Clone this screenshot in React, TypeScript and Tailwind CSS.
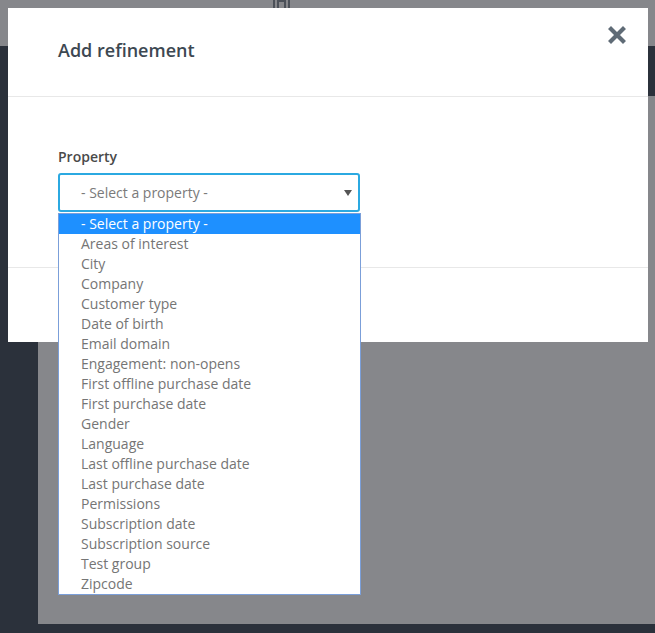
const OPTIONS = [
  'Areas of interest',
  'City',
  'Company',
  'Customer type',
  'Date of birth',
  'Email domain',
  'Engagement: non-opens',
  'First offline purchase date',
  'First purchase date',
  'Gender',
  'Language',
  'Last offline purchase date',
  'Last purchase date',
  'Permissions',
  'Subscription date',
  'Subscription source',
  'Test group',
  'Zipcode',
]

function CloseIcon() {
  return (
    <svg width="18" height="18" viewBox="0 0 18 18" fill="none">
      <path d="M3 3 L15 15 M15 3 L3 15" stroke="#5f6b76" strokeWidth="4.2" strokeLinecap="square" />
    </svg>
  )
}

export default function App() {
  return (
    <div
      className="relative h-[633px] w-[655px] overflow-hidden bg-[#2b313b]"
      style={{ fontFamily: '"Open Sans", "Noto Sans", sans-serif' }}
    >
      {/* Page behind the overlay */}
      <div className="flex h-[46px] justify-center bg-[#86878b]">
        <div className="ml-[-92px] mt-[-4px] h-[19px] w-[17px] border-2 border-[#4b5058] p-[2px]">
          <div className="h-full w-full border-2 border-[#4b5058]" />
        </div>
      </div>
      <div className="ml-[38px] mt-[50px] h-[528px] bg-[#86878b]" />

      {/* Modal */}
      <div className="absolute left-[8px] top-[8px] w-[640px] bg-white">
        <header className="relative flex h-[89px] items-center border-b border-[#e8e8e8] pl-[50px]">
          <h2 className="mt-[-3px] text-[18px] font-semibold text-[#3d4852]">Add refinement</h2>
          <button className="absolute right-[22px] top-[18px]">
            <CloseIcon />
          </button>
        </header>

        <div className="h-[170px] px-[50px] pt-[50px]">
          <label className="block text-[14px] font-semibold leading-[20px] text-[#4a4a4a]">Property</label>
          <div className="relative mt-[6px] w-[302px]">
            <div className="flex h-[39px] items-center justify-between rounded-[3px] border-2 border-[#2ba9e1] pl-[21px] pr-[6px]">
              <span className="text-[14px] text-[#7a7a7a]">- Select a property -</span>
              <svg width="8" height="6" viewBox="0 0 8 6">
                <path d="M0 0 H8 L4 6 Z" fill="#555" />
              </svg>
            </div>
            <ul className="absolute left-0 top-[40px] z-10 w-[303px] border border-[#7b9fd9] bg-white">
              <li className="h-[20px] bg-[#1e90ff] pl-[22px] text-[14px] leading-[20px] text-white">
                - Select a property -
              </li>
              {OPTIONS.map((o) => (
                <li key={o} className="h-[20px] pl-[22px] text-[14px] leading-[20px] text-[#757575]">
                  {o}
                </li>
              ))}
            </ul>
          </div>
        </div>

        <footer className="h-[75px] border-t border-[#e8e8e8]" />
      </div>
    </div>
  )
}
